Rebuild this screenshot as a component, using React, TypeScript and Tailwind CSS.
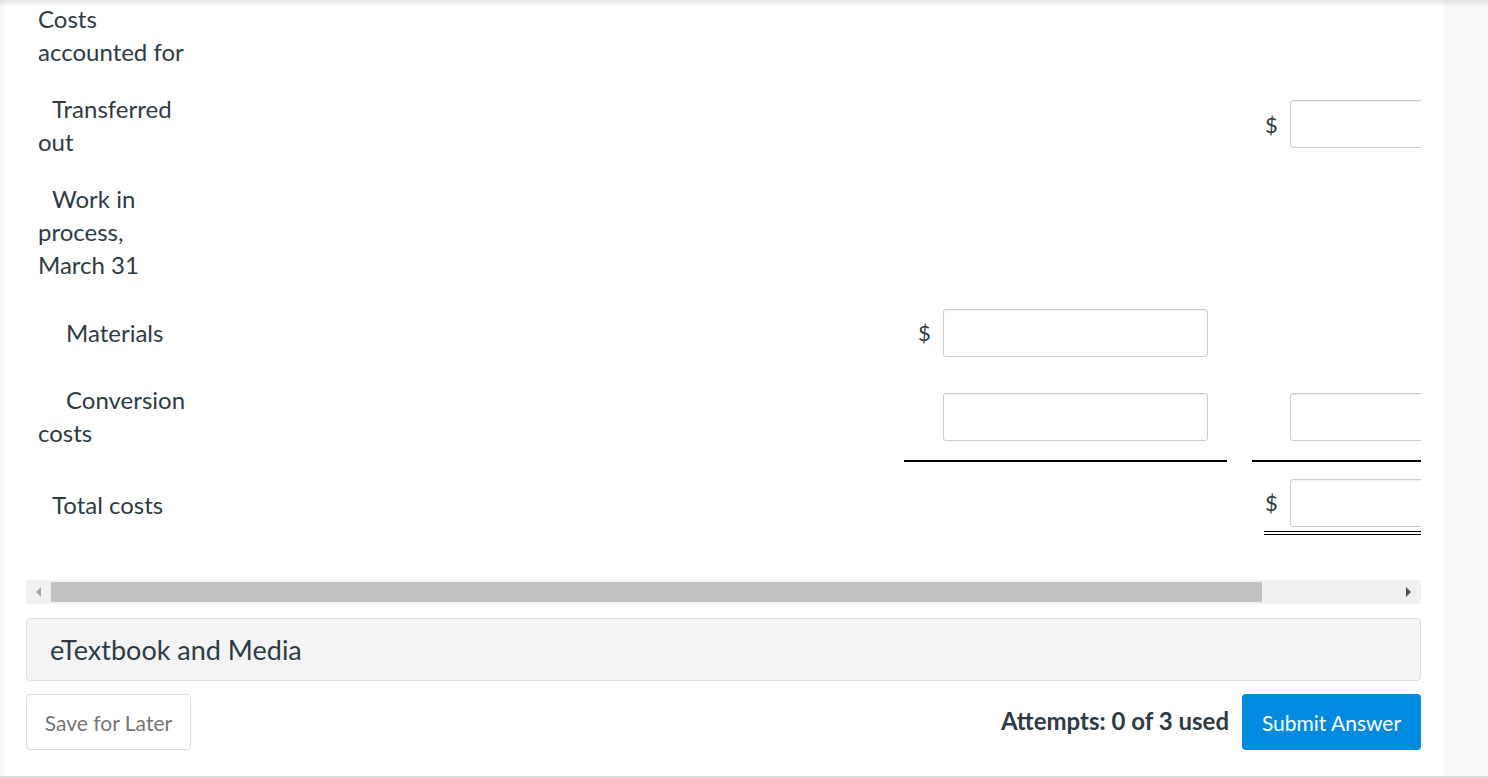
import React from "react";

const Field: React.FC<{ dollar?: boolean; pad: string }> = ({ dollar, pad }) => (
    <div className={`flex items-center ${pad}`}>
        <span className="w-[25px] text-[22px] leading-[33px]">{dollar ? "$" : ""}</span>
        <input
            type="text"
            className="w-[265px] h-[48px] shrink-0 rounded-[3px] border border-[#cccccc] bg-white shadow-[inset_0_1px_1px_rgba(0,0,0,0.075)] outline-none"
        />
    </div>
);

const Label: React.FC<{ text: string; indent?: string; extra?: string }> = ({
    text,
    indent = "",
    extra = "items-center",
}) => (
    <div className={`w-[162px] shrink-0 pl-[12px] flex ${extra}`}>
        <p className={`w-[150px] text-[24px] leading-[33px] ${indent}`}>{text}</p>
    </div>
);

export default function App() {
    return (
        <div className="relative flex h-[778px] w-full overflow-hidden border-b-2 border-[#dcdcdc] bg-[#f9f9f9] font-[Lato,sans-serif] text-[#2d3b45]">
            {/* top shadow */}
            <div className="pointer-events-none absolute inset-x-0 top-0 h-[7px] bg-gradient-to-b from-black/10 to-transparent" />

            <div className="ml-[4px] w-[1440px] shrink-0 bg-white px-[22px]">
                {/* table */}
                <div className="w-[1395px] overflow-hidden">
                    <div className="w-[1580px]">
                        {/* Costs accounted for */}
                        <div className="flex h-[81px]">
                            <Label text="Costs accounted for" extra="items-start pt-[2px]" />
                        </div>

                        {/* Transferred out */}
                        <div className="flex h-[90px]">
                            <Label text="Transferred out" indent="indent-[14px]" extra="items-center pb-[2px]" />
                            <div className="w-[716px] shrink-0" />
                            <div className="w-[323px] shrink-0" />
                            <div className="w-[25px] shrink-0" />
                            <div className="w-[323px] shrink-0 flex items-center">
                                <Field dollar pad="pl-[13px] pb-[4px]" />
                            </div>
                        </div>

                        {/* Work in process */}
                        <div className="flex h-[123px]">
                            <Label text="Work in process, March 31" indent="indent-[14px]" extra="items-center pb-[2px]" />
                        </div>

                        {/* Materials */}
                        <div className="flex h-[73px]">
                            <Label text="Materials" indent="indent-[28px]" extra="items-center pt-[4px]" />
                            <div className="w-[716px] shrink-0" />
                            <div className="w-[323px] shrink-0 flex items-center pt-[4px]">
                                <Field dollar pad="pl-[14px]" />
                            </div>
                        </div>

                        {/* Conversion costs */}
                        <div className="flex h-[95px]">
                            <Label text="Conversion costs" indent="indent-[28px]" extra="items-center pt-[3px]" />
                            <div className="w-[716px] shrink-0" />
                            <div className="w-[323px] shrink-0 flex items-center pt-[6px] border-b-2 border-black">
                                <Field pad="pl-[14px]" />
                            </div>
                            <div className="w-[25px] shrink-0" />
                            <div className="w-[323px] shrink-0 flex items-center pt-[6px] border-b-2 border-black">
                                <Field pad="pl-[13px]" />
                            </div>
                        </div>

                        {/* Total costs */}
                        <div className="flex h-[73px]">
                            <Label text="Total costs" indent="indent-[14px]" extra="items-center pt-[12px]" />
                            <div className="w-[716px] shrink-0" />
                            <div className="w-[323px] shrink-0" />
                            <div className="w-[25px] shrink-0" />
                            <div className="w-[323px] shrink-0 pl-[12px]">
                                <div className="flex h-full items-center pt-[12px] border-b-4 border-double border-black">
                                    <Field dollar pad="pl-[1px]" />
                                </div>
                            </div>
                        </div>
                    </div>
                </div>

                {/* horizontal scrollbar */}
                <div className="mt-[45px] flex h-[24px] w-[1395px] items-center bg-[#f1f1f1]">
                    <div className="flex w-[25px] justify-center">
                        <span className="h-0 w-0 border-y-[5px] border-r-[5px] border-y-transparent border-r-[#a3a3a3]" />
                    </div>
                    <div className="h-[20px] w-[1211px] bg-[#c1c1c1]" />
                    <div className="flex-1" />
                    <div className="flex w-[25px] justify-center">
                        <span className="h-0 w-0 border-y-[5px] border-l-[5px] border-y-transparent border-l-[#505050]" />
                    </div>
                </div>

                {/* eTextbook and Media */}
                <div className="mt-[14px] flex h-[63px] w-[1395px] items-center rounded-[4px] border border-[#dcdcdc] bg-[#f4f4f4] px-[23px]">
                    <span className="pt-[2px] text-[27px]">eTextbook and Media</span>
                </div>

                {/* footer */}
                <div className="mt-[13px] flex w-[1395px] items-center justify-between">
                    <button className="h-[56px] w-[165px] rounded-[4px] border border-[#dcdcdc] bg-white pt-[2px] text-[21px] text-[#757575]">
                        Save for Later
                    </button>
                    <div className="flex items-center gap-[13px]">
                        <span className="pb-[3px] text-[24px] font-bold">Attempts: 0 of 3 used</span>
                        <button className="h-[56px] w-[179px] rounded-[4px] bg-[#008be0] pt-[2px] text-[21px] text-white">
                            Submit Answer
                        </button>
                    </div>
                </div>
            </div>
        </div>
    );
}
